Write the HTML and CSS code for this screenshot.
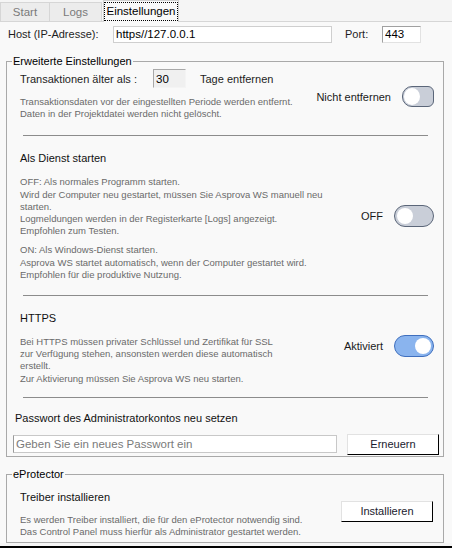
FILE: index.html
```html
<!DOCTYPE html>
<html lang="de">
<head>
<meta charset="utf-8">
<title>Einstellungen</title>
<link rel="stylesheet" href="styles.css">
</head>
<body>
<div class="tabs">
  <div class="tab tab-start">Start</div>
  <div class="tab tab-logs">Logs</div>
  <div class="tab tab-active"><span class="focus">Einstellungen</span></div>
</div>
<main class="page">
  <div class="host-row">
    <label class="host-label">Host (IP-Adresse):</label>
    <input class="field host-field" type="text" value="https//127.0.0.1">
    <label class="port-label">Port:</label>
    <input class="field port-field" type="text" value="443">
  </div>

  <fieldset class="group group-advanced">
    <legend>Erweiterte Einstellungen</legend>

    <section class="setting setting-first">
      <div class="setting-main">
        <div class="age-row">
          <span class="age-label">Transaktionen älter als :</span>
          <input class="field age-field" type="text" value="30">
          <span class="age-unit">Tage entfernen</span>
        </div>
        <p class="desc desc-age">Transaktionsdaten vor der eingestellten Periode werden entfernt.<br>Daten in der Projektdatei werden nicht gelöscht.</p>
      </div>
      <div class="setting-side side-first">
        <span class="state">Nicht entfernen</span>
        <span class="toggle toggle-small"><span class="knob"></span></span>
      </div>
    </section>

    <hr class="rule rule-first">

    <section class="setting">
      <div class="setting-main">
        <h3 class="title">Als Dienst starten</h3>
        <p class="desc desc-first">OFF: Als normales Programm starten.<br>Wird der Computer neu gestartet, müssen Sie Asprova WS manuell neu<br>starten.<br>Logmeldungen werden in der Registerkarte [Logs] angezeigt.<br>Empfohlen zum Testen.</p>
        <p class="desc desc-next">ON: Als Windows-Dienst starten.<br>Asprova WS startet automatisch, wenn der Computer gestartet wird.<br>Empfohlen für die produktive Nutzung.</p>
      </div>
      <div class="setting-side side-service">
        <span class="state">OFF</span>
        <span class="toggle"><span class="knob"></span></span>
      </div>
    </section>

    <hr class="rule">

    <section class="setting">
      <div class="setting-main">
        <h3 class="title">HTTPS</h3>
        <p class="desc desc-first">Bei HTTPS müssen privater Schlüssel und Zertifikat für SSL<br>zur Verfügung stehen, ansonsten werden diese automatisch<br>erstellt.<br>Zur Aktivierung müssen Sie Asprova WS neu starten.</p>
      </div>
      <div class="setting-side side-https">
        <span class="state">Aktiviert</span>
        <span class="toggle toggle-on"><span class="knob"></span></span>
      </div>
    </section>

    <hr class="rule rule-last">

    <section class="password">
      <h3 class="title password-title">Passwort des Administratorkontos neu setzen</h3>
      <div class="password-row">
        <input class="field password-field" type="text" placeholder="Geben Sie ein neues Passwort ein">
        <button class="btn btn-renew" type="button">Erneuern</button>
      </div>
    </section>
  </fieldset>

  <fieldset class="group group-protector">
    <legend>eProtector</legend>
    <section class="setting setting-driver">
      <div class="setting-main">
        <h3 class="title">Treiber installieren</h3>
        <p class="desc desc-driver">Es werden Treiber installiert, die für den eProtector notwendig sind.<br>Das Control Panel muss hierfür als Administrator gestartet werden.</p>
      </div>
      <div class="setting-side side-driver">
        <button class="btn btn-install" type="button">Installieren</button>
      </div>
    </section>
  </fieldset>
</main>
<div class="frame-bottom"></div>
</body>
</html>
```

FILE: styles.css
```css
* { box-sizing: border-box; }

html, body {
  margin: 0;
  padding: 0;
}

body {
  width: 452px;
  height: 548px;
  overflow: hidden;
  background: #f5f5f5;
  font-family: "Liberation Sans", Arial, sans-serif;
  font-size: 11px;
  color: #1e1e1e;
  display: flex;
  flex-direction: column;
}

/* Tabs */
.tabs {
  display: flex;
  align-items: flex-end;
  height: 21px;
  background: #f5f5f5;
  position: relative;
  z-index: 2;
}

.tab {
  height: 19px;
  display: flex;
  align-items: center;
  justify-content: center;
  border: 1px solid #d6d6d6;
  border-bottom: none;
  background: #ececec;
  color: #7a7a7a;
  font-size: 11.5px;
}

.tab-start { width: 50px; }
.tab-logs { width: 52px; border-left: none; }

.tab-active {
  width: 76px;
  height: 22px;
  margin-left: 1px;
  margin-bottom: -1px;
  background: #f9f9f9;
  color: #000;
  border-color: #d0d0d0;
  align-items: flex-start;
  padding-top: 2px;
}

.focus {
  display: block;
  outline: 1px dotted #000;
  outline-offset: 0;
  padding: 2px 1px 2px 1px;
  line-height: 13px;
}

/* Page */
.page {
  flex: 1;
  background: #f9f9f9;
  border-top: 1px solid #d6d6d6;
  display: flex;
  flex-direction: column;
}

.host-row {
  display: flex;
  align-items: center;
  padding: 3px 0 0 8px;
  height: 21px;
}

.host-label { width: 105px; }

.field {
  font-family: "Liberation Sans", Arial, sans-serif;
  font-size: 11.5px;
  color: #000;
  background: #fff;
  border: 1px solid #cfcfcf;
  height: 17px;
  padding: 0 2px;
  margin: 0;
  outline: none;
}

.host-field { width: 219px; }

.port-label { margin-left: 13px; width: 37px; }

.port-field {
  width: 39px;
  border-color: #a0a0a0 #e2e2e2 #e2e2e2 #a0a0a0;
}

/* Group boxes */
.group {
  margin: 12px 8px 0 6px;
  padding: 0 9px 0 13px;
  border: 1px solid #a9a9a9;
  min-width: 0;
}

.group legend {
  margin-left: -8px;
  padding: 0 1px;
  line-height: 13px;
  font-size: 11px;
  color: #000;
}

.group-advanced {
  height: 402px;
  padding-top: 1px;
}

.setting {
  display: grid;
  grid-template-columns: minmax(0, 1fr) auto;
  align-items: center;
}

.setting-main { min-width: 0; }

.setting-side {
  display: flex;
  align-items: center;
  gap: 11px;
}

.state { color: #1a1a1a; }

.age-row {
  display: flex;
  align-items: center;
  height: 19px;
}

.age-label { width: 133px; }

.age-field {
  width: 33px;
  height: 19px;
  background: #f0f0f0;
  border-color: #a8a8a8 #f4f4f4 #f4f4f4 #a8a8a8;
  margin-right: 14px;
}

.title {
  margin: 0;
  font-size: 11px;
  font-weight: normal;
  line-height: 13px;
  color: #111;
}

.desc {
  margin: 0;
  font-size: 9.5px;
  line-height: 12.2px;
  color: #6a6a6a;
  white-space: nowrap;
}

.desc-age { margin-top: 8px; }
.desc-first { margin-top: 11px; }
.desc-next { margin-top: 7px; }

.side-first { margin-top: 4px; gap: 11px; }

.toggle {
  position: relative;
  width: 40px;
  height: 22px;
  border: 1px solid #5b6679;
  border-radius: 11px;
  background: #c9ced8;
  display: inline-block;
}

.toggle .knob {
  position: absolute;
  left: 2px;
  top: 2px;
  width: 16px;
  height: 16px;
  border-radius: 50%;
  background: #fff;
}

.toggle-small {
  width: 32px;
  height: 21px;
  border-radius: 10px 6px 6px 10px;
}

.toggle-small .knob {
  left: 1px;
  top: 1px;
  width: 16px;
  height: 17px;
}

.toggle-on {
  background: #8ab4ee;
  border-color: #3f6fbe;
}

.toggle-on .knob {
  left: auto;
  right: 2px;
}

.side-service { margin-top: -2px; }
.side-https { margin-top: -5px; }

.rule {
  margin: 14px 6px 16px 3px;
  border: none;
  border-top: 1px solid #8c8c8c;
  height: 0;
}

.rule-first { margin-top: 15px; }
.rule-last { margin-top: 12px; margin-bottom: 14px; }

/* Password */
.password { margin: 0 -5px 0 -7px; }

.password-title { margin-left: 2px; }

.password-row {
  display: flex;
  align-items: center;
  justify-content: space-between;
  margin-top: 9px;
}

.password-field {
  width: 324px;
  height: 18px;
  border-color: #c8c8c8;
  border-left-color: #9a9a9a;
}

.password-field::placeholder { color: #7a7a7a; }

.btn {
  width: 92px;
  height: 21px;
  background: #fff;
  border: 1px solid #e2e2e2;
  border-right-color: #000;
  border-bottom-color: #000;
  font-family: "Liberation Sans", Arial, sans-serif;
  font-size: 11px;
  color: #1a1a2e;
  padding: 0;
}

/* eProtector */
.group-protector {
  margin-top: 11px;
  height: 75px;
  padding-top: 10px;
}

.desc-driver {
  margin-top: 10px;
  line-height: 11.5px;
}

.side-driver { margin-right: 1px; margin-top: -6px; }

.frame-bottom {
  height: 2px;
  background: #000;
  margin-top: 3px;
}
```
